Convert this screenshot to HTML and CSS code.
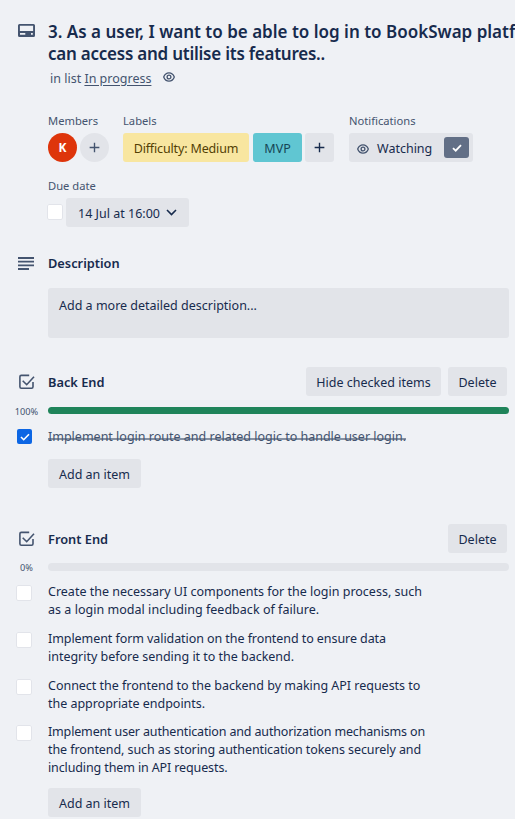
FILE: index.html
```html
<!DOCTYPE html>
<html lang="en">
<head>
<meta charset="utf-8">
<title>BookSwap card</title>
<link rel="stylesheet" href="styles.css">
</head>
<body>
<svg class="defs" aria-hidden="true">
  <symbol id="eye" viewBox="0 0 12 10"><path d="M.7 5C1.7 2.3 3.6.8 6 .8S10.3 2.3 11.3 5C10.3 7.7 8.4 9.2 6 9.2S1.7 7.7.7 5Z"/><circle cx="6" cy="5" r="1.9"/></symbol>
  <symbol id="plus" viewBox="0 0 12 12"><path d="M6 .7v10.6M.7 6h10.6"/></symbol>
  <symbol id="checklist" viewBox="0 0 17 16"><path d="M11.2 1.4H3.3Q1.9 1.4 1.9 2.8v10q0 1.4 1.4 1.4h10.3q1.4 0 1.4-1.4V8M4.7 6.7l4 4L16 2.8"/></symbol>
</svg>
<main class="card">
  <header class="row head">
    <svg class="icon card-icon" viewBox="0 0 17 13"><path fill-rule="evenodd" d="M1.5 0h14q1.5 0 1.5 1.5v10q0 1.5-1.5 1.5h-14Q0 13 0 11.5v-10Q0 0 1.5 0Zm.4 1.7v5.4h13.2V1.7ZM2 9v1.8h5.3V9Zm11 0v1.8h1.8V9Z"/></svg>
    <div class="heading">
      <h1><span class="t1">3. As a user, I want to be able to log in to BookSwap platform</span><br><span class="t2">can access and utilise its features..</span></h1>
      <p class="in-list"><span>in list <u>In progress</u></span><svg class="eye"><use href="#eye"/></svg></p>
    </div>
  </header>

  <section class="meta">
    <div class="members"><h3>Members</h3>
      <div class="line"><span class="avatar">K</span><button class="btn round"><svg class="plus"><use href="#plus"/></svg></button></div>
    </div>
    <div class="labels"><h3>Labels</h3>
      <div class="line"><span class="label yellow">Difficulty: Medium</span><span class="label teal">MVP</span><button class="btn add"><svg class="plus"><use href="#plus"/></svg></button></div>
    </div>
    <div><h3>Notifications</h3>
      <button class="btn watch"><svg class="eye"><use href="#eye"/></svg><span>Watching</span><i><svg viewBox="0 0 10 8"><path d="M1 4.2 3.7 6.7 9 1.2"/></svg></i></button>
    </div>
  </section>

  <section class="due"><h3>Due date</h3>
    <div class="line"><span class="box"></span><button class="btn date"><span>14 Jul at 16:00</span><svg viewBox="0 0 11 7"><path d="m1 1 4.5 4.5L10 1"/></svg></button></div>
  </section>

  <section class="row description">
    <svg class="icon lines" viewBox="0 0 16 13"><path d="M0 1h16M0 4.7h16M0 8.4h16M0 12h11"/></svg>
    <h2 class="desc-title">Description</h2>
    <div class="placeholder"><span>Add a more detailed description...</span></div>
  </section>

  <section class="checklist back">
    <div class="row title"><svg class="icon check-icon"><use href="#checklist"/></svg><h2 class="be">Back End</h2><button class="btn hide">Hide checked items</button><button class="btn delete">Delete</button></div>
    <div class="row progress"><small>100%</small><div class="bar full"></div></div>
    <div class="row item done"><span class="box on"><svg viewBox="0 0 10 8"><path d="M1 4 3.7 6.7 9 1.2"/></svg></span><p><span class="b1">Implement login route and related logic to handle user login.</span></p></div>
    <button class="btn add-item">Add an item</button>
  </section>

  <section class="checklist front">
    <div class="row title"><svg class="icon check-icon"><use href="#checklist"/></svg><h2 class="fe">Front End</h2><button class="btn delete">Delete</button></div>
    <div class="row progress"><small>0%</small><div class="bar"></div></div>
    <div class="row item"><span class="box"></span><p><span class="f1">Create the necessary UI components for the login process, such</span><br><span class="f2">as a login modal including feedback of failure.</span></p></div>
    <div class="row item"><span class="box"></span><p><span class="f3">Implement form validation on the frontend to ensure data</span><br><span class="f4">integrity before sending it to the backend.</span></p></div>
    <div class="row item"><span class="box"></span><p><span class="f5">Connect the frontend to the backend by making API requests to</span><br><span class="f6">the appropriate endpoints.</span></p></div>
    <div class="row item last"><span class="box"></span><p><span class="f7">Implement user authentication and authorization mechanisms on</span><br><span class="f8">the frontend, such as storing authentication tokens securely and</span><br><span class="f9">including them in API requests.</span></p></div>
    <button class="btn add-item">Add an item</button>
  </section>
</main>
</body>
</html>
```
FILE: styles.css
```css
* { box-sizing: border-box; }
body { margin: 0; background: #eff1f5; color: #172b4d; font: 12.5px/18px "Noto Sans", "Open Sans", sans-serif; overflow: hidden; height: 819px; }
h1, h2, h3, p { margin: 0; white-space: nowrap; }
svg { fill: none; stroke: currentColor; stroke-width: 1.4; display: block; flex: none; }
.defs { display: none; }
.card { padding-top: 21px; }
.row { display: grid; grid-template-columns: 48px 1fr; }
.icon { color: #44546f; }
.btn { display: flex; align-items: center; justify-content: center; height: 29px; padding: 2px 0 0; border: 0; border-radius: 3px; background: #e2e4e9; color: #172b4d; font: inherit; white-space: nowrap; }
h1 { font-size: 17px; line-height: 22px; font-weight: 600; overflow: hidden; }
h2 { font-size: 12.8px; line-height: 18px; font-weight: 600; }
h3 { font-size: 11.2px; line-height: 18px; font-weight: 400; color: #44546f; margin-bottom: 3px; }
.heading { min-width: 0; }
.t2 { letter-spacing: -.24px; }
.f2 { letter-spacing: .03px; }
.f3 { letter-spacing: -.07px; }
.f4 { letter-spacing: -.02px; }
.f5 { letter-spacing: -.02px; }
.f6 { letter-spacing: -.03px; }
.f7 { letter-spacing: -.155px; }
.f8 { letter-spacing: -.08px; }
.f9 { letter-spacing: -.12px; }
.head { height: 91px; }
.card-icon { width: 17px; height: 13px; margin: 3px 0 0 18px; fill: currentColor; stroke: none; }
.in-list { display: flex; align-items: center; height: 28px; padding-left: 2px; color: #44546f; }
.in-list .eye { margin: -4px 0 0 12px; }
.in-list u { text-underline-offset: 2px; }
.eye { width: 12px; height: 10px; stroke-width: 1.3; color: #44546f; }
.plus { width: 11px; height: 11px; margin-top: -2px; stroke-width: 1.5; }
.line { display: flex; align-items: center; }
.meta { display: flex; padding-left: 48px; height: 65px; }
.members { width: 75px; }
.labels { width: 226px; }
.avatar { width: 29px; height: 29px; margin-right: 3px; border-radius: 50%; background: #de350b; color: #fff; font-size: 12px; font-weight: 700; line-height: 29px; text-align: center; }
.round { width: 29px; border-radius: 50%; color: #44546f; }
.label { height: 29px; border-radius: 3px; line-height: 31px; text-align: center; }
.yellow { width: 126px; margin-right: 4px; background: #f8e6a0; color: #533f04; letter-spacing: -.15px; }
.teal { width: 49px; margin-right: 3px; background: #60c6d2; color: #164555; }
.add { width: 29px; }
.watch { width: 124px; justify-content: flex-start; padding-left: 8px; }
.watch span { margin-left: 8px; width: 67px; text-align: left; }
.watch i { display: grid; place-items: center; width: 25px; height: 21px; margin-top: -2px; border-radius: 3px; background: #626f86; color: #fff; }
.watch i svg { width: 10px; height: 8px; stroke-width: 1.8; }
.due { padding-left: 48px; height: 77px; }
.box { display: grid; place-items: center; width: 14px; height: 14px; background: #fff; box-shadow: 0 0 0 .5px #d5d8df; border-radius: 1px; }
.due .box { margin-top: -2px; }
.date { width: 123px; margin-left: 4px; }
.date svg { width: 11px; height: 7px; margin: -2px 0 0 6px; stroke-width: 1.6; }
.description { height: 113px; grid-template-rows: 34px 50px; }
.lines { width: 16px; height: 13px; margin: 3px 0 0 18px; stroke-width: 1.8; }
.placeholder { grid-column: 2; width: 461px; border-radius: 3px; background: #e2e4e9; padding: 9px 11px; }
.checklist .title { display: flex; align-items: center; height: 29px; }
.check-icon { width: 17px; height: 16px; margin: 0 13px 0 18px; stroke-width: 1.6; }
.title h2 { flex: 1; padding-top: 1px; }
.hide { width: 135px; margin-right: 7px; }
.delete { width: 59px; margin-right: 8px; }
.progress { height: 8px; margin-top: 10px; align-items: start; }
.progress small { font-size: 9.2px; line-height: 8px; padding: 1px 0 0 5px; text-align: center; color: #44546f; }
.bar { width: 461px; height: 8px; border-radius: 4px; background: #e2e4e9; }
.full { height: 7px; background: #1f845a; }
.item { margin-top: 12px; }
.item + .item { margin-top: 11px; }
.item .box { margin: 3px 0 0 17px; }
.item.done { margin-top: 14px; }
.back .progress { height: 7px; margin-top: 11px; }
.done p { color: #44546f; }
.b1 { display: inline-block; height: 18px; vertical-align: top; background: linear-gradient(#8590a2, #8590a2) 0 10px / 100% 2px no-repeat; }
.item .box.on { width: 15px; height: 15px; margin-top: 1px; background: #0c66e4; color: #fff; box-shadow: none; border-radius: 2px; }
.on svg { width: 10px; height: 8px; stroke-width: 1.6; }
.add-item { width: 93px; margin: 13px 0 0 48px; }
.front { margin-top: 36px; }
.item + .last { margin-top: 10px; }
.front .add-item { margin-top: 11px; }
```
